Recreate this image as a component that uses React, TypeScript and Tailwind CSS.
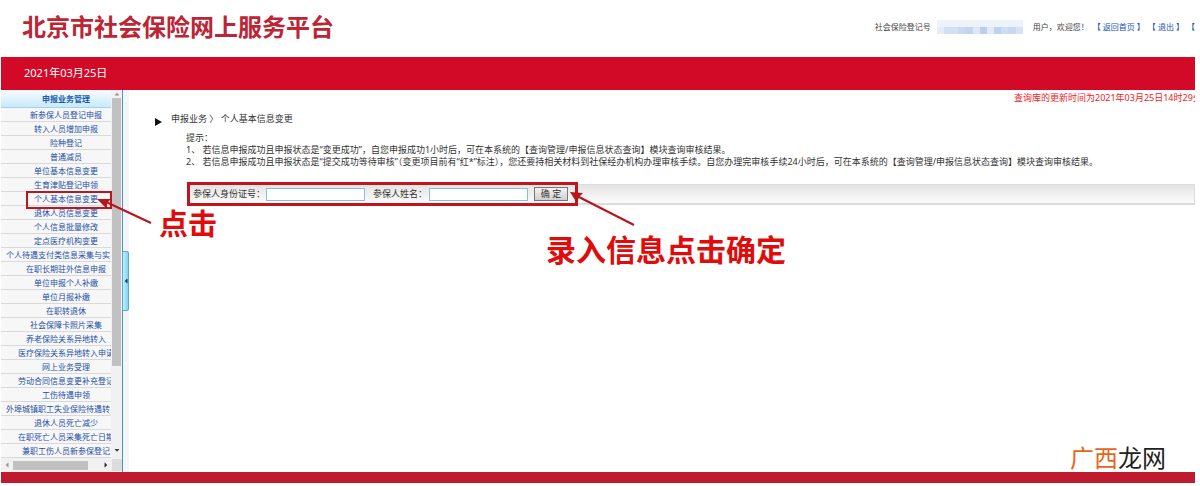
import { FaCaretDown, FaCaretLeft, FaCaretRight, FaCaretUp } from "react-icons/fa";

interface MenuItem {
  label: string;
  wide?: boolean;
}

const menuItems: MenuItem[] = [
  { label: "新参保人员登记申报" },
  { label: "转入人员增加申报" },
  { label: "险种登记" },
  { label: "普通减员" },
  { label: "单位基本信息变更" },
  { label: "生育津贴登记申领" },
  { label: "个人基本信息变更" },
  { label: "退休人员信息变更" },
  { label: "个人信息批量修改" },
  { label: "定点医疗机构变更" },
  { label: "个人待遇支付类信息采集与实", wide: true },
  { label: "在职长期驻外信息申报" },
  { label: "单位申报个人补缴" },
  { label: "单位月报补缴" },
  { label: "在职转退休" },
  { label: "社会保障卡照片采集" },
  { label: "养老保险关系异地转入" },
  { label: "医疗保险关系异地转入申请" },
  { label: "网上业务受理" },
  { label: "劳动合同信息变更补充登记" },
  { label: "工伤待遇申领" },
  { label: "外埠城镇职工失业保险待遇转", wide: true },
  { label: "退休人员死亡减少" },
  { label: "在职死亡人员采集死亡日期" },
  { label: "兼职工伤人员新参保登记" },
];

// masked registration number
const maskCells = [
  "bg-[#e4ecf8]", "bg-[#d3e0f3]", "bg-[#d3e0f3]", "bg-[#c9d9f1]", "bg-[#c3d5ef]", "bg-[#dde7f6]",
  "bg-[#b9cfee]", "bg-[#e2eaf7]", "bg-[#bdd2ee]", "bg-[#cfddf2]", "bg-[#c7d8f0]", "bg-[#d7e3f4]",
];

const Header = () => (
  <header>
    <div className="flex h-[57px] items-center justify-between whitespace-nowrap pl-[21px]">
      <h1 className="pb-1 text-[24px] font-bold leading-8 text-[#bd2434]">北京市社会保险网上服务平台</h1>
      <div className="flex items-center pb-1 text-[8px] leading-3 text-[#444]">
        <span>社会保险登记号</span>
        <span className="ml-[6px] flex h-[14px] w-[86px] flex-col">
          <span className="h-[7px] bg-[#edf3fb]" />
          <span className="flex h-[7px]">
            {maskCells.map((cell, i) => (
              <span key={i} className={`flex-1 ${cell}`} />
            ))}
          </span>
        </span>
        <span className="ml-[10px]">用户，欢迎您！</span>
        <nav className="ml-1 flex gap-[3px] text-[#1a50b8]">
          <a href="#home">【 返回首页 】</a>
          <a href="#logout">【 退出 】</a>
          <span>【</span>
        </nav>
      </div>
    </div>
    <div className="flex h-[33px] items-center bg-[#d20a28] pl-[23px] text-[11px] text-white">2021年03月25日</div>
  </header>
);

const Sidebar = () => (
  <aside className="relative flex w-[122px] shrink-0 flex-col border-r border-[#4f93c4] bg-[#f1f1f1]">
    <div className="flex">
      <div className="w-[110px] overflow-hidden bg-[#f7f7f7] pt-[2px]">
        <div className="w-[130px] text-center text-[8px]">
          <h2 className="h-4 border-b border-[#a3d3ec] bg-linear-to-b from-[#f2fafe] to-[#c8eafb] font-bold leading-[14px] text-[#1a5cae]">
            申报业务管理
          </h2>
          <ul>
            {menuItems.map((item) => (
              <li key={item.label} className="h-[14px] border-b border-[#d9d9d9] leading-[14px]">
                <a
                  href="#menu"
                  className={`block whitespace-nowrap text-[#1d4fa8] ${item.wide ? "pl-[5px] text-left" : ""}`}
                >
                  {item.label}
                </a>
              </li>
            ))}
          </ul>
        </div>
      </div>
      <div className="flex w-[11px] flex-col items-center justify-between bg-[#f1f1f1]">
        <FaCaretUp className="size-2 text-[#999]" />
        <div className="mb-auto h-[268px] w-[9px] bg-[#c1c1c1]" />
        <FaCaretDown className="mb-1 size-2 text-[#444]" />
      </div>
    </div>
    <div className="flex h-[14px] items-center">
      <FaCaretLeft className="mx-[2px] size-2 text-[#999]" />
      <div className="h-[9px] w-[75px] bg-[#c1c1c1]" />
      <FaCaretRight className="ml-[14px] size-2 text-[#333]" />
      <div className="ml-auto h-[12px] w-[10px] bg-[#dcdcdc]" />
    </div>

    {/* collapse handle */}
    <button
      type="button"
      aria-label="收起菜单"
      className="absolute top-[161px] -right-[7px] flex h-[60px] w-[7px] items-center justify-center rounded-r-xs border border-[#55a9d6] bg-linear-to-r from-[#c4edfd] to-[#83d2f5]"
    >
      <FaCaretLeft className="size-2 shrink-0 text-[#123c66]" />
    </button>

    {/* first step */}
    <div className="pointer-events-none absolute top-[101px] left-[25px] h-[18px] w-[86px] border-2 border-[#c2141c]" />
    <svg className="pointer-events-none absolute top-[105px] left-[94px] z-10" width="60" height="32" viewBox="0 0 60 32">
      <path d="M9 6 L56 28" stroke="#b5161c" strokeWidth="2" />
      <path d="M2 4 L16 4 L12 8 L12 14 Z" fill="#b5161c" />
    </svg>
    <strong className="pointer-events-none absolute top-[114px] left-[158px] z-10 whitespace-nowrap text-[29px] font-bold leading-10 text-[#e00b0b]">
      点击
    </strong>
  </aside>
);

const QueryForm = () => (
  <div className="relative ml-[58px] mt-4">
    <div className="h-[21px] border-t border-r border-b-2 border-[#dcdcdc] bg-linear-to-b from-[#e4e4e4] to-[#fcfcfc]">
      <form
        className="-mt-[3px] flex h-[24px] w-[391px] items-center whitespace-nowrap border-3 border-[#c2141c] pl-[3px] text-[9px] text-[#333]"
        onSubmit={(e) => e.preventDefault()}
      >
        <label htmlFor="id-number" className="w-[73px]">参保人身份证号：</label>
        <input id="id-number" type="text" className="h-[13px] w-[99px] border border-[#7fc4da] bg-white px-1" />
        <label htmlFor="full-name" className="ml-2 w-[56px]">参保人姓名：</label>
        <input id="full-name" type="text" className="h-[13px] w-[99px] border border-[#7fc4da] bg-white px-1" />
        <button
          type="submit"
          className="ml-[6px] h-[14px] w-[34px] border border-[#777] bg-linear-to-b from-[#f4f4f4] to-[#cfcfcf] leading-3"
        >
          确 定
        </button>
      </form>
    </div>

    {/* second step */}
    <svg className="pointer-events-none absolute top-[4px] left-[382px]" width="68" height="42" viewBox="0 0 68 42">
      <path d="M8 8 L65 37" stroke="#b5161c" strokeWidth="2" />
      <path d="M1 4 L14 5 L10 9 L8 15 Z" fill="#b5161c" />
    </svg>
    <strong className="pointer-events-none absolute top-[46px] left-[359px] whitespace-nowrap text-[30px] font-bold leading-10 text-[#e00b0b]">
      录入信息点击确定
    </strong>
  </div>
);

const Content = () => (
  <main className="min-w-0 flex-1 border-l-6 border-[#f3f5f9] text-[9px] leading-3 text-[#333]">
    <div className="flex justify-end pt-[2px]">
      <p className="w-[181px] overflow-hidden whitespace-nowrap text-[#f0201c]">查询库的更新时间为2021年03月25日14时29分</p>
    </div>
    <div className="mt-2 flex items-center whitespace-nowrap pl-[26px]">
      <svg className="mt-[6px] mr-[9px]" width="7" height="8" viewBox="0 0 7 8">
        <path d="M0 0 L7 4 L0 8 Z" fill="#111" />
      </svg>
      <span>申报业务 〉 个人基本信息变更</span>
    </div>
    <div className="mt-[6px] whitespace-nowrap pl-[57px]">
      <p>提示：</p>
      <ol>
        <li>1、 若信息申报成功且申报状态是“变更成功”，自您申报成功1小时后，可在本系统的【查询管理/申报信息状态查询】模块查询审核结果。</li>
        <li>2、 若信息申报成功且申报状态是“提交成功等待审核”（变更项目前有“红*”标注），您还要持相关材料到社保经办机构办理审核手续。自您办理完审核手续24小时后，可在本系统的【查询管理/申报信息状态查询】模块查询审核结果。</li>
      </ol>
    </div>
    <QueryForm />
  </main>
);

const App = () => (
  <div className="relative overflow-hidden bg-white pr-[5px] pb-[3px] pl-px font-['Noto_Sans','Noto_Sans_CJK_SC',sans-serif]">
    <Header />
    <div className="flex">
      <Sidebar />
      <Content />
    </div>
    <footer className="h-[11px] bg-[#bf1a2d]" />
    <div className="absolute right-[34px] bottom-[12px] text-[24px] leading-8 text-[#222]">
      <span className="text-[#e8641b]">广西</span>龙网
    </div>
  </div>
);

export default App;
